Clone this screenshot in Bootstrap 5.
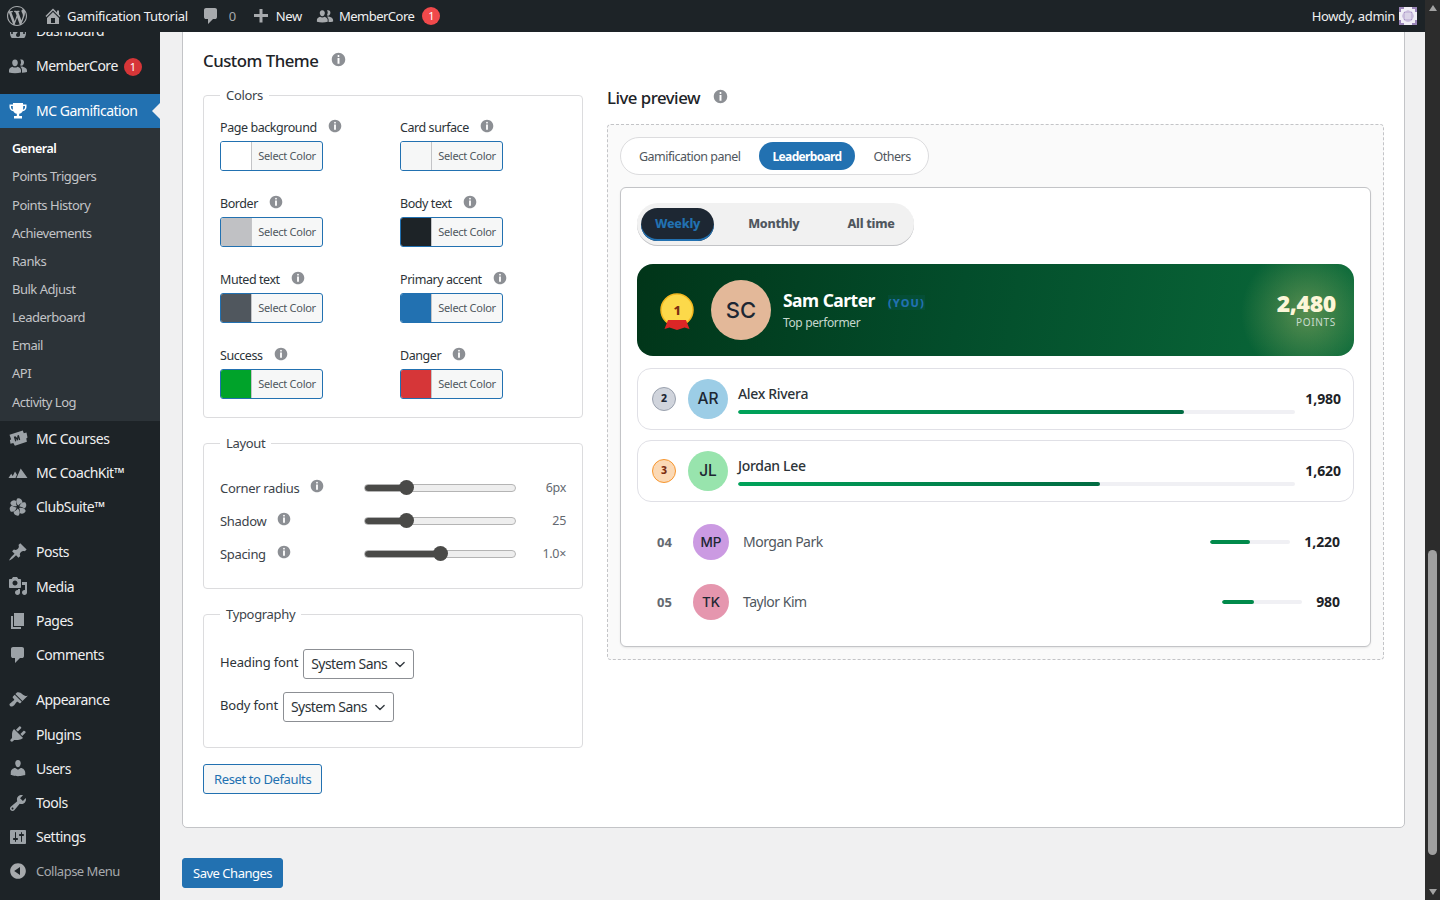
<!DOCTYPE html>
<html lang="en">
<head>
<meta charset="utf-8">
<title>Custom Theme</title>
<link href="https://cdn.jsdelivr.net/npm/bootstrap@5.3.0/dist/css/bootstrap.min.css" rel="stylesheet">
<style>
:root{--wpblue:#2271b1;--ink:#2c3338;--uifont:"Noto Sans","Open Sans",sans-serif}
html,body{height:100%;overflow:hidden;background:#f0f0f1}
body{font-family:var(--uifont);font-size:13px;color:var(--ink);letter-spacing:-.025em}
svg.ic{fill:currentColor;display:block;flex:none}
.shell{height:900px}
.mainpane{width:1425px;height:900px}
.vscroll{width:15px;height:900px;background:#2c2c2c}
.vscroll-gap{height:540px}
.vscroll-arrow-up{width:0;height:0;border:4.5px solid transparent;border-top:0;border-bottom:6px solid #a3a3a3;margin:5px auto 0}
.vscroll-arrow-down{width:0;height:0;border:4.5px solid transparent;border-bottom:0;border-top:6px solid #a3a3a3;margin:0 auto 5px}
.vscroll-thumb{width:9px;height:305px;background:#9f9f9f;border-radius:5px;margin:0 auto 34px}
.adminbar{height:32px;background:#1d2327;color:#f0f0f1;flex:none;padding:0 8px 0 7px}
.adminbar>span{padding-top:2px}
.adminbar .barico{color:#a7aaad}
.bar-muted{color:#a7aaad}
.bargap-m{margin-left:13px}
.bargap-plus{margin-left:15px}
.bargap-group{margin-left:14px}
.bartext-new{margin-left:5px}
.bartext-member{margin-left:5px;letter-spacing:-.04em}
.countdot{background:#d63638;color:#fff;font-size:11px;font-weight:400;width:18px;height:18px;line-height:18px;padding:0;border-radius:50%;letter-spacing:0;text-align:center;display:inline-block}
.countdot-bar{background:#f0494b;padding-top:0!important}
.countdot-side{margin-left:-2px;margin-top:2px}
.gravatar{width:18px;height:18px;display:block}
.sidemenu{width:160px;background:#1d2327;overflow:hidden;flex:none;color:#f0f0f1;font-size:14px;letter-spacing:-.035em}
.menuitem{height:34.3px;padding-left:8px;gap:8px;color:#f0f0f1}
.menuitem svg{color:#9ca2a7}
.menuitem-first{margin-top:-17px}
.lift-1{margin-top:-2px}
.lift-2{margin-top:-4px}
.menusep{height:10.7px}
.menuitem-on{background:var(--wpblue);color:#fff;position:relative;height:34px}
.menuitem-on svg{color:#fff}
.menuitem-on::after{content:"";position:absolute;right:0;top:9px;border:8px solid transparent;border-right-color:#f0f0f1;border-left:0}
.submenu{background:#2c3338;padding:6px 0 5.5px;font-size:13px;color:#c3c4c7}
.subitem{height:28.15px;line-height:28.15px;padding-left:12px}
.subitem-on{color:#fff;font-weight:600;font-size:12.5px;line-height:30px}
.menuitem-dim{color:#a7aaad;font-size:13px}
.menuitem-dim svg{color:#a7aaad}
.workarea{padding:0 20px 0 22px;min-width:0}
.themepanel{background:#fff;border:1px solid #c3c4c7;border-radius:0 0 5px 5px;margin-top:-10px;padding:26px 20px 33px}
.panelhead{font-size:16.8px;line-height:24px;font-weight:500;color:#1d2327;margin:0;letter-spacing:-.03em}
.info-dot{color:#8c8f94}
.head-info{margin-left:13px;margin-top:-4px}
.field-info{margin-left:11px;margin-top:-5px}
.headrow{margin-bottom:13px}
.leftcol{width:380px;flex:none}
.rightcol{min-width:0}
.cfgset{border:1px solid #dcdcde;border-radius:4px;padding:0 16px 18px;margin:0 0 16px;min-width:0}
.cfgset legend{float:none;width:auto;font-size:13px;line-height:18px;padding:0 6px;margin:0;color:#3c434a}
.cfgset-slim{padding-bottom:17px}
.swatchgrid{display:grid;grid-template-columns:180px 166px;row-gap:24px;padding-top:15px}
.swatchlabel{font-size:12.5px;line-height:18px;color:#2c3338;margin-bottom:4px;letter-spacing:-.035em}
.colorbtn{width:103px;height:30px;border:1px solid var(--wpblue);border-radius:3px;background:#f6f7f7;overflow:hidden;padding:0;display:flex;font-size:11px;color:#50575e;letter-spacing:-.025em}
.colorbtn-chip{width:31px;height:100%;border-right:1px solid #c3c4c7;flex:none}
.colorbtn-text{flex:1;line-height:28px;text-align:center}
.chip-white{background:#fff}.chip-surface{background:#f6f7f7}.chip-border{background:#c0c1c4}.chip-ink{background:#1d2327}
.chip-muted{background:#50575e}.chip-primary{background:#2271b1}.chip-success{background:#00a32a}.chip-danger{background:#d63638}
.sliderrows{padding-top:20px}
.sliderrow{height:33px;color:#3c434a}
.sliderlabel{width:144px;flex:none}
.slideval{width:50px;text-align:right;font-size:12.5px;color:#646970;flex:none}
.rangebar{width:152px;flex:none;height:16px;margin:-2px 0 0;-webkit-appearance:none;appearance:none;background:transparent;display:block}
.rangebar::-webkit-slider-runnable-track{height:8px;border-radius:4px;border:1px solid #b4b4b4;background:linear-gradient(to right,#4a4a48 var(--fill),#eee var(--fill))}
.rangebar::-webkit-slider-thumb{-webkit-appearance:none;width:15px;height:15px;border-radius:50%;background:#4a4a48;margin-top:-4.5px}
.fontrows{padding-top:26px;padding-bottom:7px;row-gap:13px}
.fontrow-label{margin:-2px 5px 0 0;letter-spacing:-.012em}
.fontselect{width:111px;height:30px;padding:0 20px 0 7px;font-size:14px;line-height:28px;color:#2c3338;border:1px solid #8c8f94;border-radius:3px;background-position:right 6px center;letter-spacing:-.04em;background-size:14px 11px}
.linebtn{border:1px solid var(--wpblue);color:var(--wpblue);background:#f6f7f7;font-size:13px;line-height:28px;height:30px;padding:0 10px;border-radius:3px;letter-spacing:-.03em}
.savebtn{background:var(--wpblue);border:1px solid var(--wpblue);color:#fff;font-size:13px;line-height:28px;height:30px;padding:0 10px;border-radius:3px;margin-top:30px;letter-spacing:-.037em}
.previewhead{margin-top:37px;margin-bottom:14px}
.previewbox{border:1px dashed #c3c4c7;border-radius:4px;background:#fafafa;padding:12px}
.tabpills{background:#fff;border:1px solid #dcdcde;border-radius:19px;padding:4px;gap:4px;margin-bottom:12px;width:309px}
.tabpill{height:28px;line-height:30px;padding:0 14px;border-radius:14px;color:#50575e;font-size:12.5px;white-space:nowrap;letter-spacing:-.04em;flex:none}
.tabpill-on{background:var(--wpblue);color:#fff;font-weight:700;font-size:12px;letter-spacing:-.055em}
.boardcard{border:1px solid #c3c4c7;border-radius:6px;padding:15px 16px 14px;background:#fff;box-shadow:0 1px 2px rgba(0,0,0,.08)}
.periodbar{width:277px;height:43px;background:#f1f1f1;border-radius:21px;padding:5px 4px;gap:20px;box-shadow:inset 0 -1px 0 #c3c4c7;margin-bottom:18px}
.periodpill{height:33px;line-height:32px;padding:0 14px;border-radius:17px;font-weight:800;font-size:12.5px;color:#50575e;letter-spacing:-.02em;white-space:nowrap;flex:none}
.periodpill-on{background:#1d2733;color:var(--wpblue);box-shadow:inset 0 -2px 0 var(--wpblue)}
.heroteam{height:92px;border-radius:16px;padding:0 18px 0 23px;margin-bottom:12px;background:radial-gradient(circle 66px at 670px 49px,rgba(255,225,130,.32),rgba(255,225,130,0) 100%),linear-gradient(100deg,#013519 0%,#034d2b 45%,#0a6a3a 100%);color:#fff}
.medalmark{width:34px;height:38px;margin:4px 17px 0 0;flex:none}
.faceround{border-radius:50%;color:#1d2733;font-family:"Inter","Liberation Sans",sans-serif;font-weight:500;letter-spacing:0;flex:none;display:flex;align-items:center;justify-content:center}
.face-60{width:60px;height:60px;font-size:22px}
.face-40{width:40px;height:40px;font-size:15.5px}
.face-36{width:36px;height:36px;font-size:13.5px}
.face-sand{background:#e3b899}.face-sky{background:#9ccde6}.face-mint{background:#98e4ad}.face-lilac{background:#cb9ae2}.face-rose{background:#e596ae}
.herotext{margin-left:12px}
.heroname{font-size:17.5px;line-height:22px;font-weight:700;letter-spacing:-.03em;padding-top:1px}
.youtag{color:var(--wpblue);font-size:11px;font-weight:800;letter-spacing:.1em;background:rgba(34,113,177,.1);margin-left:13px}
.herosub{font-size:12px;line-height:18px;color:#c6d8cd;letter-spacing:-.03em}
.heropoints{padding-bottom:2px}
.heroscore{font-size:23px;line-height:26px;font-weight:900;color:#fdf6d8;letter-spacing:-.015em}
.herolabel{font-size:10px;line-height:12px;letter-spacing:.07em;color:#c9dccf}
.rankrow{height:62px;border:1px solid #e0e0e6;border-radius:14px;padding:0 12px 0 14px;margin-bottom:10px;background:#fff}
.rankbadge{width:24px;height:24px;border-radius:50%;border:1.5px solid;font-size:10.5px;font-weight:800;display:flex;align-items:center;justify-content:center;flex:none;margin-right:12px;letter-spacing:0}
.rank-silver{background:#d0d4dc;border-color:#9aa1ae;color:#1d2733}
.rank-bronze{background:#fbd9b5;border-color:#f7962e;color:#7c2d12}
.rowmain{margin-left:10px}
.rowname{font-size:14px;line-height:20px;color:#2c3338;font-weight:500}
.rowbar{height:4px;border-radius:2px;background:#f0f0f4;margin-top:6px}
.rowbar .progress-bar{background:linear-gradient(90deg,#00a35a,#016b42);border-radius:2px}
.rowscore{font-size:14px;font-weight:700;color:#1d2327;margin:-2px 0 0 10px;letter-spacing:-.005em}
.plainrow{height:60px;padding:0 14px 0 20px}
.plainnum{width:16px;margin:1px 20px 0 0;font-weight:700;font-size:13px;color:#646970;letter-spacing:0}
.plainname{font-size:14px;color:#50575e;margin:-2px 0 0 14px;letter-spacing:-.035em}
.minibar{width:80px;height:4px;border-radius:2px;background:#f0f0f4;margin-right:14px}
.minibar .progress-bar{background:#018a4b;border-radius:2px}
</style>
</head>
<body>
<svg width="0" height="0" class="position-absolute">
<defs>
<symbol id="i-wp" viewBox="0 0 20 20"><path d="M20 10c0-5.51-4.49-10-10-10C4.48 0 0 4.49 0 10c0 5.52 4.48 10 10 10 5.51 0 10-4.48 10-10zM7.78 15.37L4.37 6.22c.55-.02 1.17-.08 1.17-.08.5-.06.44-1.13-.06-1.11 0 0-1.45.11-2.37.11-.18 0-.37 0-.58-.01C4.12 2.69 6.87 1.11 10 1.11c2.33 0 4.45.87 6.05 2.34-.68-.11-1.65.39-1.65 1.58 0 .74.45 1.36.9 2.1.35.61.55 1.36.55 2.46 0 1.49-1.4 5-1.4 5l-3.03-8.37c.54-.02.82-.17.82-.17.5-.05.44-1.25-.06-1.22 0 0-1.44.12-2.38.12-.87 0-2.33-.12-2.33-.12-.5-.03-.56 1.2-.06 1.22l.92.08 1.26 3.41zM17.41 10c.24-.64.74-1.87.43-4.25.7 1.29 1.05 2.71 1.05 4.25 0 3.29-1.73 6.24-4.4 7.78.97-2.59 1.94-5.2 2.92-7.78zM6.1 18.09C3.12 16.65 1.11 13.53 1.11 10c0-1.3.23-2.48.72-3.59C3.25 10.3 4.67 14.2 6.1 18.09zm4.03-6.63l2.58 6.98c-.86.29-1.76.45-2.71.45-.79 0-1.57-.11-2.29-.33.81-2.38 1.62-4.74 2.42-7.1z"/></symbol>
<symbol id="i-home" viewBox="0 0 20 20"><path d="M16 8.5l1.53 1.53-1.06 1.06L10 4.62l-6.47 6.47-1.06-1.06L10 2.5l4 4v-2h2v4zm-6-2.46l6 5.99V18H4v-5.97zM12 17v-5H8v5h4z"/></symbol>
<symbol id="i-dash" viewBox="0 0 20 20"><path d="M3.76 16h12.48c1.1-1.37 1.76-3.11 1.76-5 0-4.42-3.58-8-8-8s-8 3.58-8 8c0 1.89.66 3.63 1.76 5zM10 4c.55 0 1 .45 1 1s-.45 1-1 1-1-.45-1-1 .45-1 1-1zM6 6c.55 0 1 .45 1 1s-.45 1-1 1-1-.45-1-1 .45-1 1-1zm8 0c.55 0 1 .45 1 1s-.45 1-1 1-1-.45-1-1 .45-1 1-1zm-5.370 5.550L12 7v6c0 1.100-.900 2-2 2s-2-.900-2-2c0-.570.240-1.080.630-1.450zM4 10c.55 0 1 .45 1 1s-.45 1-1 1-1-.45-1-1 .45-1 1-1zm12 0c.55 0 1 .45 1 1s-.45 1-1 1-1-.45-1-1 .45-1 1-1z"/></symbol>
<symbol id="i-comment" viewBox="0 0 20 20"><path d="M5 2h9q.82 0 1.41.59T16 4v7q0 .82-.59 1.41T14 13h-2l-5 5v-5H5q-.82 0-1.41-.59T3 11V4q0-.82.59-1.41T5 2z"/></symbol>
<symbol id="i-plus" viewBox="0 0 20 20"><path d="M17 8v3h-5.500v5.500h-3V11H3V8h5.500V3h3v5z"/></symbol>
<symbol id="i-group" viewBox="0 0 20 20"><path d="M7 3.500c1.900 0 3 1.600 2.800 3.500-.2 1.700-1 3.300-2.800 3.300S4.400 8.700 4.200 7C4 5.100 5.100 3.500 7 3.500zM13.500 3.500c1.700 0 2.700 1.500 2.500 3.200-.2 1.500-1 3-2.500 3-.6 0-1.100-.2-1.500-.5.600-.8 1-1.800 1-2.800 0-1-.2-2-.8-2.800.200-.100.500-.100.800-.100zM1 16.500v-2.200c0-1.800 1.800-3.200 3.500-3.600.7.600 1.500.9 2.500.9s1.800-.3 2.500-.9c1.700.4 3.500 1.800 3.500 3.600v2.200c-1.800.5-3.800.8-6 .8s-4.200-.3-6-.8zM14 16.700v-2.400c0-1.400-.7-2.600-1.700-3.500.4-.1.800-.2 1.200-.2.800 0 1.300.1 1.900.5 1.700.3 3.600 1.600 3.600 3.300v1.700c-1.400.4-3 .6-5 .6z"/></symbol>
<symbol id="i-trophy" viewBox="0 0 20 20"><path d="M5 2h10v1.500h3.500V6c0 2.300-1.500 3.900-3.900 4.200-.7 1.300-1.900 2.200-3.400 2.600V15H14v2.500H6V15h2.800v-2.200c-1.500-.4-2.700-1.300-3.400-2.600C3 9.900 1.500 8.300 1.500 6V3.500H5V2zM3 5v1c0 1.300.7 2.300 2 2.700C4.900 7.900 4.800 5.900 4.800 5H3zm14 0h-1.800c0 .9-.1 2.900-.2 3.700 1.300-.4 2-1.400 2-2.700V5z"/></symbol>
<symbol id="i-courses" viewBox="0 0 20 20"><path fill-rule="evenodd" d="M1.500 6.800L14.800 2.500l1 2.800 2.700-.7 1 5-1.200 1 .6 3.200-12 4-1.600-2.800-2.800.7-.6-3.400 1.200-1L1.500 6.800zM5.800 8.800l1.400 4.700 1.200-.4-.8-2.700 1.700 2.200.8-.3.100-2.800.8 2.700 1.200-.4L10.900 7.100 9.400 7.600 9.200 10.100 7.400 8.300 5.800 8.800z"/></symbol>
<symbol id="i-peaks" viewBox="0 0 20 20"><path d="M.5 15l2.700-4.300L5 13.500V15H.5zM3.800 15L7 8.500l2 3.300-1.500 3.200H3.800zM8.500 15l4.200-9.500L19.500 15H8.500z"/></symbol>
<symbol id="i-club" viewBox="0 0 20 20"><path d="M10.300 8.600C8.200 6.800 7.400 3.300 9.700 1.300c2.800-.2 4.800 1.500 4.700 4.100-1.400.6-3 1.400-4.100 3.200z"/><path transform="rotate(60 10 10)" d="M10.300 8.600C8.200 6.800 7.400 3.300 9.700 1.300c2.800-.2 4.800 1.500 4.700 4.100-1.400.6-3 1.400-4.100 3.200z"/><path transform="rotate(120 10 10)" d="M10.300 8.600C8.200 6.800 7.400 3.300 9.700 1.300c2.800-.2 4.800 1.500 4.700 4.100-1.400.6-3 1.400-4.100 3.200z"/><path transform="rotate(180 10 10)" d="M10.300 8.600C8.200 6.800 7.400 3.300 9.700 1.300c2.800-.2 4.800 1.500 4.700 4.100-1.400.6-3 1.400-4.100 3.200z"/><path transform="rotate(240 10 10)" d="M10.300 8.600C8.200 6.800 7.400 3.300 9.700 1.300c2.800-.2 4.800 1.500 4.700 4.100-1.400.6-3 1.400-4.100 3.200z"/><path transform="rotate(300 10 10)" d="M10.300 8.600C8.200 6.800 7.400 3.300 9.700 1.300c2.800-.2 4.800 1.500 4.700 4.100-1.400.6-3 1.400-4.100 3.200z"/></symbol>
<symbol id="i-pin" viewBox="0 0 20 20"><path d="M10.440 3.020l1.820-1.820 6.360 6.350-1.830 1.820c-1.050-.68-2.480-.57-3.410.36l-.75.75c-.92.93-1.040 2.350-.35 3.410l-1.830 1.820-2.410-2.410-2.800 2.790c-.42.42-3.380 2.710-3.800 2.290s1.860-3.390 2.280-3.810l2.790-2.790L4.100 9.360l1.830-1.820c1.050.69 2.480.57 3.400-.36l.75-.75c.93-.92 1.050-2.350.36-3.410z"/></symbol>
<symbol id="i-media" viewBox="0 0 20 20"><path d="M13 11V4c0-.55-.45-1-1-1h-1.670L9 1H5L3.670 3H2c-.55 0-1 .45-1 1v7c0 .55.45 1 1 1h10c.55 0 1-.45 1-1zM7 4.500c1.380 0 2.500 1.120 2.500 2.500S8.380 9.500 7 9.500 4.500 8.380 4.500 7 5.620 4.500 7 4.500zM14 6h5v10.500c0 1.380-1.120 2.500-2.500 2.500S14 17.880 14 16.500s1.120-2.500 2.500-2.500c.17 0 .34.020.5.050V9h-3V6zm-4 8.050V13h2v3.500c0 1.380-1.120 2.500-2.500 2.500S7 17.880 7 16.500 8.120 14 9.500 14c.17 0 .34.020.5.050z"/></symbol>
<symbol id="i-page" viewBox="0 0 20 20"><path d="M6 15V2h10v13H6zm-1 1h8v2H3V5h2v11z"/></symbol>
<symbol id="i-brush" viewBox="0 0 20 20"><path d="M14.480 11.060L7.410 3.990l1.500-1.500c.5-.56 2.300-.47 3.510.32 1.210.8 1.430 1.280 2.910 2.100 1.180.64 2.450 1.260 4.450.85zm-.71.71L6.700 4.700 4.930 6.470c-.39.39-.39 1.020 0 1.410l1.060 1.060c.39.39.39 1.030 0 1.420-.6.6-1.430 1.110-2.210 1.690-.35.26-.7.53-1.010.84C1.430 13.230.91 14.680 2.120 15.900c1.210 1.210 2.670.69 4.010-.67.3-.31.58-.66.84-1.010.58-.78 1.090-1.610 1.690-2.210.39-.39 1.020-.39 1.410 0l1.060 1.060c.39.39 1.020.39 1.410 0z"/></symbol>
<symbol id="i-plug" viewBox="0 0 20 20"><path d="M13.110 4.360L9.870 7.600 8 5.730l3.240-3.240c.35-.34 1.050-.2 1.560.32.52.51.66 1.210.31 1.550zm-8 1.770l.91-1.120 9.010 9.010-1.190.84c-.71.71-2.630 1.160-3.820 1.160H6.140L4.900 17.260c-.59.59-1.540.59-2.120 0-.59-.58-.59-1.530 0-2.120l1.240-1.240v-3.880c0-1.130.4-3.190 1.090-3.890zm7.260 3.970l3.240-3.240c.34-.35 1.040-.21 1.550.31.52.51.66 1.210.31 1.550l-3.240 3.250z"/></symbol>
<symbol id="i-user" viewBox="0 0 20 20"><path d="M10 9.250c-2.270 0-2.730-3.440-2.730-3.440C7 4.020 7.820 2 9.970 2c2.160 0 2.980 2.020 2.710 3.810 0 0-.41 3.440-2.680 3.440zm0 2.570L12.720 10c2.390 0 4.520 2.330 4.520 4.530v2.490s-3.650 1.130-7.240 1.130c-3.650 0-7.240-1.130-7.240-1.130v-2.490c0-2.250 1.940-4.480 4.470-4.480z"/></symbol>
<symbol id="i-tool" viewBox="0 0 20 20"><path d="M16.680 9.770c-1.340 1.340-3.300 1.670-4.950.99l-5.410 6.520c-.99.99-2.590.99-3.580 0s-.99-2.590 0-3.570l6.520-5.420c-.68-1.650-.35-3.610.99-4.950 1.280-1.280 3.120-1.620 4.720-1.060l-2.890 2.890 2.820 2.820 2.860-2.870c.53 1.580.18 3.390-1.080 4.650zM3.810 16.210c.4.39 1.040.39 1.430 0 .4-.4.4-1.040 0-1.430-.39-.4-1.030-.4-1.430 0-.39.39-.39 1.030 0 1.430z"/></symbol>
<symbol id="i-sliders" viewBox="0 0 20 20"><path d="M18 16V4c0-.55-.45-1-1-1H3c-.55 0-1 .45-1 1v12c0 .55.45 1 1 1h14c.55 0 1-.45 1-1zM8 11h1c.55 0 1 .45 1 1s-.45 1-1 1H8v1.500c0 .28-.22.5-.5.5s-.5-.22-.5-.5V13H6c-.55 0-1-.45-1-1s.45-1 1-1h1V5.500c0-.28.22-.5.5-.5s.5.22.5.5V11zm5-2h-1c-.55 0-1-.45-1-1s.45-1 1-1h1V5.500c0-.28.22-.5.5-.5s.5.22.5.5V7h1c.55 0 1 .45 1 1s-.45 1-1 1h-1v5.500c0 .28-.22.5-.5.5s-.5-.22-.5-.5V9z"/></symbol>
<symbol id="i-collapse" viewBox="0 0 20 20"><path d="M10 2.160c4.330 0 7.840 3.510 7.840 7.840s-3.510 7.840-7.840 7.840S2.160 14.330 2.160 10 5.710 2.160 10 2.160zm2 11.720V6.120L6.180 9.970z"/></symbol>
<symbol id="i-info" viewBox="0 0 20 20"><path d="M10 1c4.970 0 9 4.030 9 9s-4.030 9-9 9-9-4.030-9-9 4.030-9 9-9zm1.300 4.200c0-.72-.58-1.300-1.300-1.300s-1.300.58-1.300 1.300.58 1.300 1.300 1.300 1.300-.58 1.300-1.300zM11.300 15.500V8H8.700v7.500h2.600z"/></symbol>
</defs>
</svg>

<div class="shell d-flex">
  <div class="mainpane d-flex flex-column">
    <header class="adminbar d-flex align-items-center">
      <svg class="ic barico" width="20" height="20"><use href="#i-wp"/></svg>
      <svg class="ic barico ms-3" width="20" height="20"><use href="#i-home"/></svg>
      <span class="ms-1">Gamification Tutorial</span>
      <svg class="ic barico bargap-m" width="20" height="20"><use href="#i-comment"/></svg>
      <span class="bar-muted ms-2">0</span>
      <svg class="ic barico bargap-plus" width="20" height="20"><use href="#i-plus"/></svg>
      <span class="bartext-new">New</span>
      <svg class="ic barico bargap-group" width="18" height="18"><use href="#i-group"/></svg>
      <span class="bartext-member">MemberCore</span>
      <span class="countdot countdot-bar ms-2">1</span>
      <span class="ms-auto">Howdy, admin</span>
      <svg class="gravatar ms-1" viewBox="0 0 18 18"><rect width="18" height="18" fill="#f1eff6"/><path d="M0 0h5v2H2v3H0zM13 0h5v5h-2V2h-3zM0 13h2v3h3v2H0zM16 13h2v5h-5v-2h3z" fill="#9a85b8"/><circle cx="9" cy="9" r="5.500" fill="#a893c6"/><path d="M4 7h10M4 9h10M4 11h10M7 4v10M9 4v10M11 4v10" stroke="#f1eff6" stroke-width=".9"/></svg>
    </header>
    <div class="d-flex flex-grow-1 overflow-hidden">
      <nav class="sidemenu d-flex flex-column">
        <div class="menuitem menuitem-first d-flex align-items-center"><svg class="ic" width="20" height="20"><use href="#i-dash"/></svg><span class="lift-2">Dashboard</span></div>
        <div class="menuitem d-flex align-items-center"><svg class="ic" width="20" height="20"><use href="#i-group"/></svg><span class="lift-1">MemberCore</span><span class="countdot countdot-side">1</span></div>
        <div class="menusep"></div>
        <div class="menuitem menuitem-on d-flex align-items-center"><svg class="ic" width="20" height="20"><use href="#i-trophy"/></svg><span class="lift-1">MC Gamification</span></div>
        <div class="submenu">
          <div class="subitem subitem-on">General</div>
          <div class="subitem">Points Triggers</div>
          <div class="subitem">Points History</div>
          <div class="subitem">Achievements</div>
          <div class="subitem">Ranks</div>
          <div class="subitem">Bulk Adjust</div>
          <div class="subitem">Leaderboard</div>
          <div class="subitem">Email</div>
          <div class="subitem">API</div>
          <div class="subitem">Activity Log</div>
        </div>
        <div class="menuitem d-flex align-items-center"><svg class="ic" width="20" height="20"><use href="#i-courses"/></svg><span>MC Courses</span></div>
        <div class="menuitem d-flex align-items-center"><svg class="ic" width="20" height="20"><use href="#i-peaks"/></svg><span>MC CoachKit™</span></div>
        <div class="menuitem d-flex align-items-center"><svg class="ic" width="20" height="20"><use href="#i-club"/></svg><span>ClubSuite™</span></div>
        <div class="menusep"></div>
        <div class="menuitem d-flex align-items-center"><svg class="ic" width="20" height="20"><use href="#i-pin"/></svg><span>Posts</span></div>
        <div class="menuitem d-flex align-items-center"><svg class="ic" width="20" height="20"><use href="#i-media"/></svg><span>Media</span></div>
        <div class="menuitem d-flex align-items-center"><svg class="ic" width="20" height="20"><use href="#i-page"/></svg><span>Pages</span></div>
        <div class="menuitem d-flex align-items-center"><svg class="ic" width="20" height="20"><use href="#i-comment"/></svg><span>Comments</span></div>
        <div class="menusep"></div>
        <div class="menuitem d-flex align-items-center"><svg class="ic" width="20" height="20"><use href="#i-brush"/></svg><span>Appearance</span></div>
        <div class="menuitem d-flex align-items-center"><svg class="ic" width="20" height="20"><use href="#i-plug"/></svg><span>Plugins</span></div>
        <div class="menuitem d-flex align-items-center"><svg class="ic" width="20" height="20"><use href="#i-user"/></svg><span>Users</span></div>
        <div class="menuitem d-flex align-items-center"><svg class="ic" width="20" height="20"><use href="#i-tool"/></svg><span>Tools</span></div>
        <div class="menuitem d-flex align-items-center"><svg class="ic" width="20" height="20"><use href="#i-sliders"/></svg><span>Settings</span></div>
        <div class="menuitem menuitem-dim d-flex align-items-center"><svg class="ic" width="20" height="20"><use href="#i-collapse"/></svg><span>Collapse Menu</span></div>
      </nav>
      <main class="workarea flex-grow-1">
        <div class="themepanel">
          <div class="d-flex gap-4">
            <div class="leftcol">
              <div class="headrow d-flex align-items-center">
                <h2 class="panelhead">Custom Theme</h2>
                <svg class="ic info-dot head-info" width="15" height="15"><use href="#i-info"/></svg>
              </div>
              <fieldset class="cfgset">
                <legend>Colors</legend>
                <div class="swatchgrid">
                  <div><div class="swatchlabel d-flex align-items-center">Page background<svg class="ic info-dot field-info" width="14" height="14"><use href="#i-info"/></svg></div><div class="colorbtn"><span class="colorbtn-chip chip-white"></span><span class="colorbtn-text">Select Color</span></div></div>
                  <div><div class="swatchlabel d-flex align-items-center">Card surface<svg class="ic info-dot field-info" width="14" height="14"><use href="#i-info"/></svg></div><div class="colorbtn"><span class="colorbtn-chip chip-surface"></span><span class="colorbtn-text">Select Color</span></div></div>
                  <div><div class="swatchlabel d-flex align-items-center">Border<svg class="ic info-dot field-info" width="14" height="14"><use href="#i-info"/></svg></div><div class="colorbtn"><span class="colorbtn-chip chip-border"></span><span class="colorbtn-text">Select Color</span></div></div>
                  <div><div class="swatchlabel d-flex align-items-center">Body text<svg class="ic info-dot field-info" width="14" height="14"><use href="#i-info"/></svg></div><div class="colorbtn"><span class="colorbtn-chip chip-ink"></span><span class="colorbtn-text">Select Color</span></div></div>
                  <div><div class="swatchlabel d-flex align-items-center">Muted text<svg class="ic info-dot field-info" width="14" height="14"><use href="#i-info"/></svg></div><div class="colorbtn"><span class="colorbtn-chip chip-muted"></span><span class="colorbtn-text">Select Color</span></div></div>
                  <div><div class="swatchlabel d-flex align-items-center">Primary accent<svg class="ic info-dot field-info" width="14" height="14"><use href="#i-info"/></svg></div><div class="colorbtn"><span class="colorbtn-chip chip-primary"></span><span class="colorbtn-text">Select Color</span></div></div>
                  <div><div class="swatchlabel d-flex align-items-center">Success<svg class="ic info-dot field-info" width="14" height="14"><use href="#i-info"/></svg></div><div class="colorbtn"><span class="colorbtn-chip chip-success"></span><span class="colorbtn-text">Select Color</span></div></div>
                  <div><div class="swatchlabel d-flex align-items-center">Danger<svg class="ic info-dot field-info" width="14" height="14"><use href="#i-info"/></svg></div><div class="colorbtn"><span class="colorbtn-chip chip-danger"></span><span class="colorbtn-text">Select Color</span></div></div>
                </div>
              </fieldset>
              <fieldset class="cfgset cfgset-slim">
                <legend>Layout</legend>
                <div class="sliderrows">
                  <div class="sliderrow d-flex align-items-center"><div class="sliderlabel d-flex align-items-center">Corner radius<svg class="ic info-dot field-info" width="14" height="14"><use href="#i-info"/></svg></div><input type="range" class="rangebar" min="0" max="24" value="6" style="--fill:28%"><div class="slideval">6px</div></div>
                  <div class="sliderrow d-flex align-items-center"><div class="sliderlabel d-flex align-items-center">Shadow<svg class="ic info-dot field-info" width="14" height="14"><use href="#i-info"/></svg></div><input type="range" class="rangebar" min="0" max="100" value="25" style="--fill:28%"><div class="slideval">25</div></div>
                  <div class="sliderrow d-flex align-items-center"><div class="sliderlabel d-flex align-items-center">Spacing<svg class="ic info-dot field-info" width="14" height="14"><use href="#i-info"/></svg></div><input type="range" class="rangebar" min="0" max="100" value="50" style="--fill:50%"><div class="slideval">1.0×</div></div>
                </div>
              </fieldset>
              <fieldset class="cfgset">
                <legend>Typography</legend>
                <div class="fontrows d-flex flex-column">
                  <div class="d-flex align-items-center"><span class="fontrow-label">Heading font</span><select class="form-select fontselect"><option>System Sans</option></select></div>
                  <div class="d-flex align-items-center"><span class="fontrow-label">Body font</span><select class="form-select fontselect"><option>System Sans</option></select></div>
                </div>
              </fieldset>
              <button type="button" class="btn linebtn">Reset to Defaults</button>
            </div>
            <div class="rightcol flex-grow-1">
              <div class="previewhead d-flex align-items-center">
                <h2 class="panelhead">Live preview</h2>
                <svg class="ic info-dot head-info" width="15" height="15"><use href="#i-info"/></svg>
              </div>
              <div class="previewbox">
                <div class="tabpills d-flex">
                  <span class="tabpill">Gamification panel</span>
                  <span class="tabpill tabpill-on">Leaderboard</span>
                  <span class="tabpill">Others</span>
                </div>
                <div class="card boardcard">
                  <div class="periodbar d-flex">
                    <span class="periodpill periodpill-on">Weekly</span>
                    <span class="periodpill">Monthly</span>
                    <span class="periodpill">All time</span>
                  </div>
                  <div class="heroteam d-flex align-items-center">
                    <svg class="medalmark" viewBox="0 0 34 38"><circle cx="17" cy="17" r="16" fill="#fcd94a" stroke="#f5b81f" stroke-width="1.500"/><path d="M8 27h18l3.500 9-5-1.500L17 37l-7.500-2.500-5 1.500z" fill="#dc2626"/><text x="17" y="22" text-anchor="middle" font-family="Noto Sans,sans-serif" font-size="13" font-weight="800" fill="#7c2d12">1</text></svg>
                    <div class="faceround face-60 face-sand">SC</div>
                    <div class="herotext">
                      <div class="heroname">Sam Carter<span class="youtag">(YOU)</span></div>
                      <div class="herosub">Top performer</div>
                    </div>
                    <div class="heropoints ms-auto text-end">
                      <div class="heroscore">2,480</div>
                      <div class="herolabel">POINTS</div>
                    </div>
                  </div>
                  <div class="rankrow d-flex align-items-center">
                    <span class="rankbadge rank-silver">2</span>
                    <div class="faceround face-40 face-sky">AR</div>
                    <div class="flex-grow-1 rowmain">
                      <div class="rowname">Alex Rivera</div>
                      <div class="progress rowbar"><div class="progress-bar" style="width:80%"></div></div>
                    </div>
                    <span class="rowscore">1,980</span>
                  </div>
                  <div class="rankrow d-flex align-items-center">
                    <span class="rankbadge rank-bronze">3</span>
                    <div class="faceround face-40 face-mint">JL</div>
                    <div class="flex-grow-1 rowmain">
                      <div class="rowname">Jordan Lee</div>
                      <div class="progress rowbar"><div class="progress-bar" style="width:65%"></div></div>
                    </div>
                    <span class="rowscore">1,620</span>
                  </div>
                  <div class="plainrow d-flex align-items-center">
                    <span class="plainnum">04</span>
                    <div class="faceround face-36 face-lilac">MP</div>
                    <span class="plainname">Morgan Park</span>
                    <div class="progress minibar ms-auto"><div class="progress-bar" style="width:49%"></div></div>
                    <span class="rowscore ms-0">1,220</span>
                  </div>
                  <div class="plainrow d-flex align-items-center">
                    <span class="plainnum">05</span>
                    <div class="faceround face-36 face-rose">TK</div>
                    <span class="plainname">Taylor Kim</span>
                    <div class="progress minibar ms-auto"><div class="progress-bar" style="width:40%"></div></div>
                    <span class="rowscore ms-0">980</span>
                  </div>
                </div>
              </div>
            </div>
          </div>
        </div>
        <button type="button" class="btn savebtn">Save Changes</button>
      </main>
    </div>
  </div>
  <aside class="vscroll d-flex flex-column">
    <div class="vscroll-arrow-up"></div>
    <div class="vscroll-gap flex-grow-1"></div>
    <div class="vscroll-thumb"></div>
    <div class="vscroll-arrow-down"></div>
  </aside>
</div>
</body>
</html>
